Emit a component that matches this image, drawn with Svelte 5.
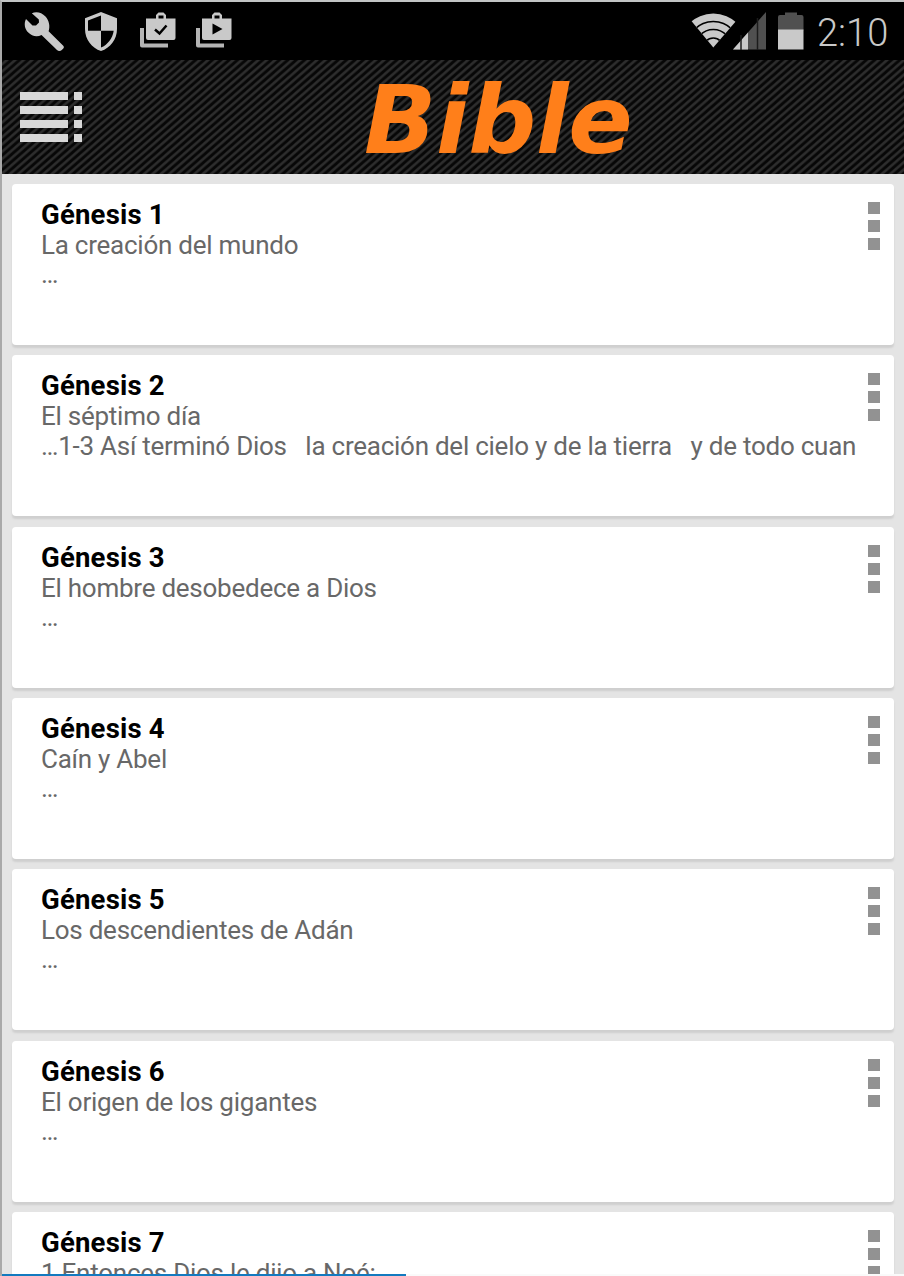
<script>
  const chapters = [
    { title: 'Génesis 1', sub: 'La creación del mundo', more: '…' },
    { title: 'Génesis 2', sub: 'El séptimo día', more: '…1-3 Así terminó Dios\u00a0\u00a0 la creación del cielo y de la tierra\u00a0\u00a0 y de todo cuan' },
    { title: 'Génesis 3', sub: 'El hombre desobedece a Dios', more: '…' },
    { title: 'Génesis 4', sub: 'Caín y Abel', more: '…' },
    { title: 'Génesis 5', sub: 'Los descendientes de Adán', more: '…' },
    { title: 'Génesis 6', sub: 'El origen de los gigantes', more: '…' },
    { title: 'Génesis 7', sub: '1 Entonces Dios le dijo a Noé:', more: '' }
  ];
</script>

<div class="screen">
  <div class="status">
    <svg class="left" width="240" height="58" viewBox="0 2 240 58" fill="#c9c9c9">
      <path d="M63 45.5 L48.6 31.2 C50.300 26 49 20.500 45.500 16.500 C41.500 12 36 11.200 31.800 13.200 L38.800 19.500 L39 22.500 L36 25.600 L32.500 25.600 L26 19 C23.700 23.500 24.700 29 28.300 32.600 C31.800 36.400 37.300 37.200 41.500 35 L57 50 C58.200 51.200 60.500 51.200 61.800 50 L63.300 48.500 C64.200 47.500 64 46.500 63 45.500 Z" />
      <path d="M101 12 L117 18.300 V29 C117 39.300 110.200 48.300 101 51 C91.800 48.300 85 39.300 85 29 V18.300 Z M101 15.500 L88 20.400 V30.700 H101 Z M101 30.700 V47.500 C107.500 45 112.700 38.200 113.700 30.700 Z" fill-rule="evenodd" />
      {#each [0, 56] as dx}
        <g transform="translate({dx} 0)">
          <path d="M140 28 H144 V43.500 H168 V47.500 H142 Q140 47.500 140 45.500 Z" fill="#b4b4b4" />
          <path d="M146 18.500 H156 V15 L158.500 12.500 H163.500 L166 15 V18.500 H175.500 V38 Q175.500 40 173.500 40 H148 Q146 40 146 38 Z M158.500 18.500 H163.500 V15.500 H158.500 Z" fill-rule="evenodd" />
        </g>
      {/each}
      <path d="M155 29.500 L159.500 33.500 L166.500 25.500" fill="none" stroke="#000" stroke-width="2.500" />
      <path d="M212.500 23.500 L222.500 29 L212.500 34.500 Z" fill="#000" />
    </svg>
    <svg class="right" width="126" height="58" viewBox="686 2 126 58">
      <clipPath id="fan"><path d="M713.300 47.500 L691 20.500 Q713.300 5 736.500 20.500 Z" /></clipPath>
      <g clip-path="url(#fan)">
        <circle cx="713.300" cy="48" r="34.500" fill="#c9c9c9" />
        <g fill="none" stroke="#000" stroke-width="1.700">
          <circle cx="713.300" cy="48" r="26.500" />
          <circle cx="713.300" cy="48" r="18.500" />
          <circle cx="713.300" cy="48" r="10" />
        </g>
      </g>
      <path d="M733 49.500 L766 12 V49.500 Z" fill="#505050" />
      <path d="M733 49.500 L748 32.500 V49.500 Z" fill="#c9c9c9" />
      <path d="M741 35 V50 M757.500 18 V50" stroke="#1c1c1c" stroke-width="1.500" />
      <path d="M778 30.500 V17 Q778 15 780 15 H785 V12.500 H797 V15 H801.500 Q803.500 15 803.500 17 V30.500 Z" fill="#505050" />
      <path d="M778 29.500 H803.500 V49.500 H778 Z" fill="#c9c9c9" />
    </svg>
    <span class="time">2:10</span>
  </div>
  <header>
    <svg class="menu" width="62" height="50" viewBox="0 0 62 50" fill="#d8d8d8">
      {#each [0, 14, 28, 42] as y}
        <rect x="0" {y} width="48" height="8" />
        <rect x="54" {y} width="8" height="8" />
      {/each}
    </svg>
    <h1>Bible</h1>
  </header>
  <main>
    {#each chapters as c}
      <article>
        <div class="copy">
          <h2>{c.title}</h2>
          <p>{c.sub}</p>
          <p class:alone={c.more === '…'}>{c.more}</p>
        </div>
        <div class="dots"><i></i><i></i><i></i></div>
      </article>
    {/each}
  </main>
  <div class="scroll"><span></span></div>
</div>

<style>
  :global(body) { overflow: hidden; }
  .screen {
    position: relative; box-sizing: border-box; width: 904px; height: 1276px; overflow: hidden;
    display: flex; flex-direction: column; background: #e4e4e4;
    border-top: 2px solid #c2c4c4; border-left: 2px solid #a9a9a9;
    font-family: Roboto, "Liberation Sans", sans-serif;
  }
  .status { height: 58px; flex: none; display: flex; background: #000; color: #c9c9c9; }
  .left { margin-left: -2px; }
  .right { margin-left: 446px; }
  .time { margin-left: 5px; font-size: 38px; line-height: 62px; font-weight: 350; letter-spacing: 0; white-space: nowrap; }
  header {
    height: 114px; flex: none; display: flex; align-items: flex-start;
    background: repeating-linear-gradient(-41deg, #070707 0 1.500px, #2d2d2d 3px 4.200px, #070707 5.500px);
  }
  .menu { margin: 32px 0 0 18px; }
  h1 { margin: 0 0 0 282px; font: italic bold 95px/120px "DejaVu Sans", sans-serif; color: #ff7f1a; letter-spacing: -0.300px; }
  main { display: flex; flex-direction: column; gap: 10.350px; padding: 10px 10px 0; }
  article {
    box-sizing: border-box; height: 161px; flex: none; display: flex; justify-content: space-between;
    padding: 16px 14px 0 29px; background: #fff; border-radius: 4px; box-shadow: 0 3px 2px #cfcfcf;
  }
  .copy { flex: 1; min-width: 0; white-space: nowrap; }
  h2 { margin: 0; font-size: 27.500px; line-height: 30px; font-weight: 700; color: #000; letter-spacing: 0.200px; }
  p { margin: 0; font-size: 26px; line-height: 30px; font-weight: 400; color: #686868; letter-spacing: -0.250px; }
  .alone { line-height: 28px; }
  .dots { flex: none; display: flex; flex-direction: column; gap: 6px; padding-top: 2px; }
  .dots i { width: 12px; height: 12px; background: #929292; }
  .scroll { position: absolute; left: -2px; right: 0; bottom: 0; height: 2px; background: #fafafa; }
  .scroll span { display: block; width: 406px; height: 2px; background: #137abf; }
</style>
